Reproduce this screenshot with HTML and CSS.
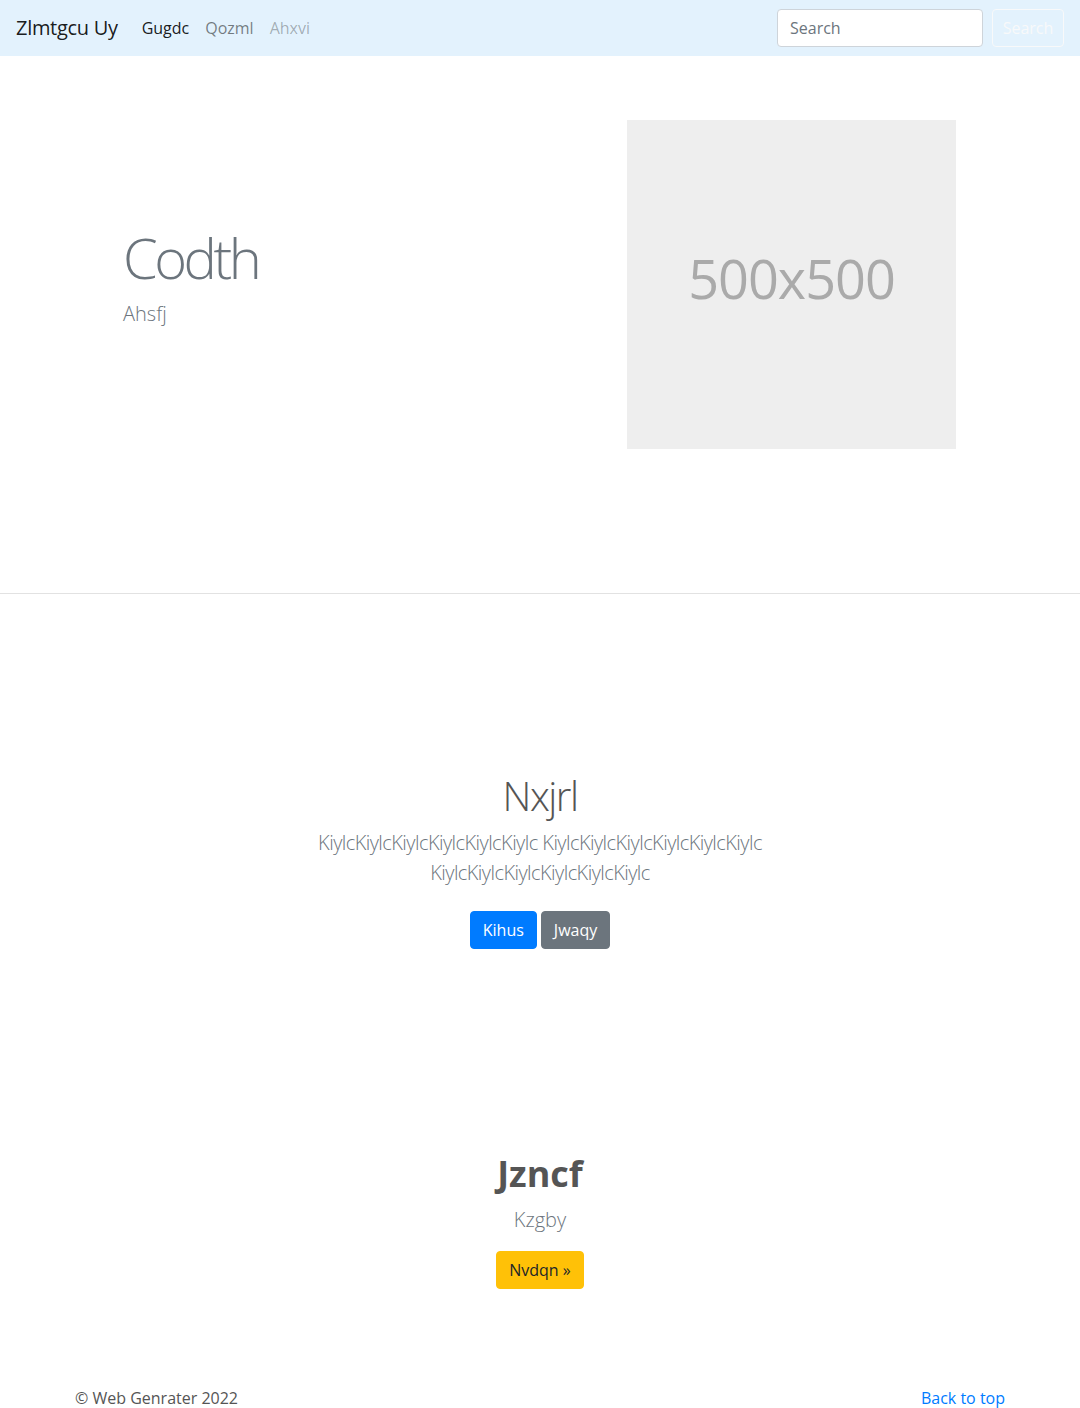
FILE: index.html
```html
<!DOCTYPE html>
<html lang="en">
<head>
<meta charset="utf-8">
<title>Zlmtgcu Uy</title>
<link rel="stylesheet" href="styles.css">
</head>
<body>
<header class="navbar">
  <a class="brand" href="#">Zlmtgcu Uy</a>
  <ul class="nav">
    <li><a class="nav-link active" href="#">Gugdc</a></li>
    <li><a class="nav-link" href="#">Qozml</a></li>
    <li><a class="nav-link disabled" href="#">Ahxvi</a></li>
  </ul>
  <form class="search">
    <input class="search-input" type="search" placeholder="Search">
    <button class="btn btn-outline-light" type="button">Search</button>
  </form>
</header>
<main>
  <section class="hero">
    <div class="hero-inner">
      <div class="hero-text">
        <h1 class="display">Codth</h1>
        <p class="lead muted">Ahsfj</p>
      </div>
      <div class="hero-media">
        <div class="placeholder">500x500</div>
      </div>
    </div>
  </section>
  <section class="jumbo">
    <div class="jumbo-inner">
      <h1 class="jumbo-heading">Nxjrl</h1>
      <p class="lead muted jumbo-lead">KiylcKiylcKiylcKiylcKiylcKiylc KiylcKiylcKiylcKiylcKiylcKiylc KiylcKiylcKiylcKiylcKiylcKiylc</p>
      <div class="actions">
        <a class="btn btn-primary" href="#">Kihus</a>
        <a class="btn btn-secondary" href="#">Jwaqy</a>
      </div>
    </div>
  </section>
  <section class="cta">
    <h2 class="cta-title">Jzncf</h2>
    <p class="lead muted">Kzgby</p>
    <a class="btn btn-warning" href="#">Nvdqn »</a>
  </section>
</main>
<footer class="footer">
  <p class="copy">© Web Genrater 2022</p>
  <a class="back" href="#">Back to top</a>
</footer>
</body>
</html>
```

FILE: styles.css
```css
* { box-sizing: border-box; }
html, body { margin: 0; }
body {
  font-family: "Open Sans", "Noto Sans", sans-serif;
  font-size: 16px;
  line-height: 1.5;
  color: #212529;
  background: #fff;
}
a { text-decoration: none; }
h1, h2, p { margin: 0; }

/* navbar */
.navbar {
  display: flex;
  align-items: center;
  height: 56px;
  padding: 8px 16px;
  background: #e3f2fd;
}
.brand {
  font-size: 20px;
  line-height: 30px;
  padding: 5px 0;
  margin-right: 16px;
  letter-spacing: -0.3px;
  color: rgba(0, 0, 0, .9);
}
.nav {
  display: flex;
  flex: 1;
  list-style: none;
  margin: 0;
  padding: 0;
}
.nav-link {
  display: block;
  padding: 8px;
  color: rgba(0, 0, 0, .5);
}
.nav-link.active { color: rgba(0, 0, 0, .9); }
.nav-link.disabled { color: rgba(0, 0, 0, .3); }
.search { display: flex; align-items: center; margin: 0; }
.search-input {
  width: 206px;
  height: 38px;
  margin-right: 9px;
  padding: 6px 12px;
  font: inherit;
  color: #495057;
  background: #fff;
  border: 1px solid #ced4da;
  border-radius: 4px;
}
.search-input::placeholder { color: #6c757d; }

/* buttons */
.btn {
  display: inline-block;
  font-family: inherit;
  font-size: 16px;
  line-height: 24px;
  padding: 6px 12px;
  border: 1px solid transparent;
  border-radius: 4px;
  text-align: center;
}
.btn-outline-light {
  width: 72px;
  padding: 6px 0;
  color: #f8f9fa;
  background: transparent;
  border-color: #f8f9fa;
}
.btn-primary { color: #fff; background: #007bff; border-color: #007bff; }
.btn-secondary { color: #fff; background: #6c757d; border-color: #6c757d; }
.btn-warning { color: #212529; background: #ffc107; border-color: #ffc107; }

/* text helpers */
.lead { font-size: 20px; font-weight: 300; line-height: 1.5; }
.muted { color: #6c757d; }

/* hero */
.hero {
  padding: 64px 0 144px;
  border-bottom: 1px solid #e2e2e2;
}
.hero-inner {
  width: 930px;
  margin: 0 auto;
  display: grid;
  grid-template-columns: 1fr 1fr;
  column-gap: 30px;
  align-items: center;
}
.hero-text { padding-left: 48px; }
.display {
  font-size: 56px;
  font-weight: 300;
  line-height: 1.2;
  letter-spacing: -3.5px;
  color: #6c757d;
  margin-bottom: 8px;
}
.hero-text .lead { margin-bottom: 16px; }
.hero-media { padding-left: 72px; }
.placeholder {
  width: 329px;
  height: 329px;
  padding-bottom: 12px;
  display: flex;
  align-items: center;
  justify-content: center;
  background: #eee;
  color: #aaa;
  font-size: 54px;
  letter-spacing: -1px;
}

/* jumbo */
.jumbo { padding-top: 178px; text-align: center; }
.jumbo-inner { width: 450px; margin: 0 auto; }
.jumbo-heading {
  font-size: 40px;
  font-weight: 300;
  line-height: 1.2;
  letter-spacing: -1.5px;
  color: #555;
  margin-bottom: 8px;
}
.jumbo-lead { letter-spacing: -0.55px; }
.actions {
  display: flex;
  justify-content: center;
  gap: 4px;
  margin-top: 23px;
}

/* cta */
.cta { padding-top: 203px; text-align: center; }
.cta-title {
  font-size: 36px;
  font-weight: 700;
  line-height: 1.2;
  color: #555;
  margin-bottom: 10px;
}
.cta .lead { margin-bottom: 16px; }

/* footer */
.footer {
  width: 930px;
  margin: 0 auto;
  padding: 97px 0 48px;
  display: flex;
  justify-content: space-between;
  align-items: baseline;
}
.copy { color: #555; }
.back { color: #007bff; }
```
